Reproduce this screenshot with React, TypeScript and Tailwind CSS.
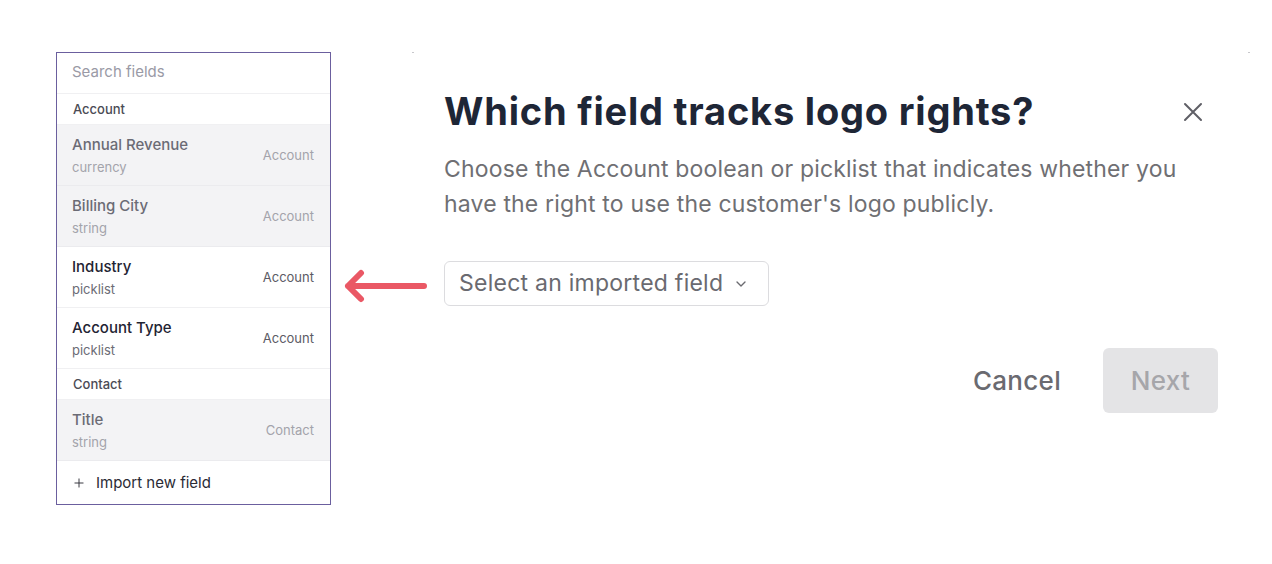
import { ChevronDown, Plus } from "lucide-react";

type Field = { name: string; type: string; object: string; muted: boolean };

const accountFields: Field[] = [
  { name: "Annual Revenue", type: "currency", object: "Account", muted: true },
  { name: "Billing City", type: "string", object: "Account", muted: true },
  { name: "Industry", type: "picklist", object: "Account", muted: false },
  { name: "Account Type", type: "picklist", object: "Account", muted: false },
];

const contactFields: Field[] = [
  { name: "Title", type: "string", object: "Contact", muted: true },
];

const SectionHeader = ({ label }: { label: string }) => (
  <div className="h-[31px] flex items-center px-4 pt-[1px] border-b border-[#f0f0f2] text-[13px] font-medium text-[#4b4b55]">
    {label}
  </div>
);

const FieldRow = ({ field }: { field: Field }) => (
  <div
    className={
      field.muted
        ? "flex items-center justify-between pl-[15px] pr-4 pt-[10px] pb-[8px] border-b border-[#ebebee] bg-[#f3f3f5]"
        : "flex items-center justify-between pl-[15px] pr-4 pt-[10px] pb-[8px] border-b border-[#f0f0f2] bg-white"
    }
  >
    <div className="flex flex-col">
      <span
        className={
          field.muted
            ? "text-[15px] leading-5 font-medium text-[#6b6b75]"
            : "text-[15px] leading-5 font-medium text-[#1f2433]"
        }
      >
        {field.name}
      </span>
      <span
        className={
          field.muted
            ? "mt-[2px] text-[13px] leading-5 text-[#a3a3ab]"
            : "mt-[2px] text-[13px] leading-5 text-[#6b6b75]"
        }
      >
        {field.type}
      </span>
    </div>
    <span
      className={
        field.muted ? "text-[13px] text-[#a3a3ab]" : "text-[13px] text-[#5b5b65]"
      }
    >
      {field.object}
    </span>
  </div>
);

const FieldPicker = () => (
  <div className="w-[275px] self-start border border-[#6b5f9e] bg-white flex flex-col">
    <div className="h-[41px] flex items-center pl-[15px] pr-4 pb-[2px] border-b border-[#f0f0f2] text-[15px] text-[#9a9aa6]">
      Search fields
    </div>
    <SectionHeader label="Account" />
    {accountFields.map((f) => (
      <FieldRow key={f.name} field={f} />
    ))}
    <SectionHeader label="Contact" />
    {contactFields.map((f) => (
      <FieldRow key={f.name} field={f} />
    ))}
    <div className="h-[43px] flex items-center gap-[10px] pl-[15px] pr-4 pt-[1px] text-[15px] text-[#2b2b35]">
      <Plus className="w-[14px] h-[14px]" strokeWidth={1.6} />
      Import new field
    </div>
  </div>
);

export default function App() {
  return (
    <div
      className="w-[1272px] h-[564px] bg-white flex items-start pt-[52px] pl-[56px]"
      style={{ fontFamily: "Inter, 'Noto Sans', sans-serif" }}
    >
      <FieldPicker />

      {/* pointer arrow */}
      <div className="w-[81px] pl-[13px] pt-[216px]">
        <svg width="84" height="36" viewBox="0 0 84 36" fill="none">
          <path
            d="M80 18 H4 M17 5 L4 18 L17 31"
            stroke="#ea5865"
            strokeWidth="6"
            strokeLinecap="round"
            strokeLinejoin="round"
          />
        </svg>
      </div>

      {/* dialog */}
      <div className="w-[838px] flex flex-col">
        <div className="flex justify-between h-0">
          <span className="block w-[2px] h-[1px] bg-[#c8c8cc]" />
          <span className="block w-[2px] h-[1px] bg-[#c8c8cc]" />
        </div>
        <div className="px-8 pt-[38px] flex flex-col">
          <div className="flex items-center justify-between">
            <h1 className="text-[38px] leading-[42px] font-bold text-[#1e2636] tracking-[0.8px]">
              Which field tracks logo rights?
            </h1>
            <svg width="20" height="20" viewBox="0 0 20 20" className="mr-[15px] mt-[2px]">
              <path
                d="M2 2 L18 18 M18 2 L2 18"
                stroke="#5f5f66"
                strokeWidth="2"
                strokeLinecap="round"
              />
            </svg>
          </div>
          <p className="mt-[20px] w-[760px] text-[23px] leading-[35px] tracking-[0.17px] text-[#6f6f73]">
            Choose the Account boolean or picklist that indicates whether you have
            the right to use the customer's logo publicly.
          </p>
          <div className="mt-[39px]">
            <button className="h-[45px] flex items-center gap-[10px] pl-[14px] pr-[19px] border border-[#dcdcdf] rounded-[6px] text-[23px] tracking-[0.25px] text-[#6a6a70]">
              Select an imported field
              <ChevronDown className="w-[16px] h-[16px] text-[#6a6a70]" strokeWidth={2} />
            </button>
          </div>
          <div className="mt-[42px] flex items-center justify-end gap-[42px]">
            <span className="text-[26px] font-medium tracking-[0.3px] text-[#6a6a70]">Cancel</span>
            <button className="w-[115px] h-[65px] rounded-[6px] bg-[#e4e4e6] text-[26px] font-medium tracking-[0.3px] text-[#a6a6aa]">
              Next
            </button>
          </div>
        </div>
      </div>
    </div>
  );
}
